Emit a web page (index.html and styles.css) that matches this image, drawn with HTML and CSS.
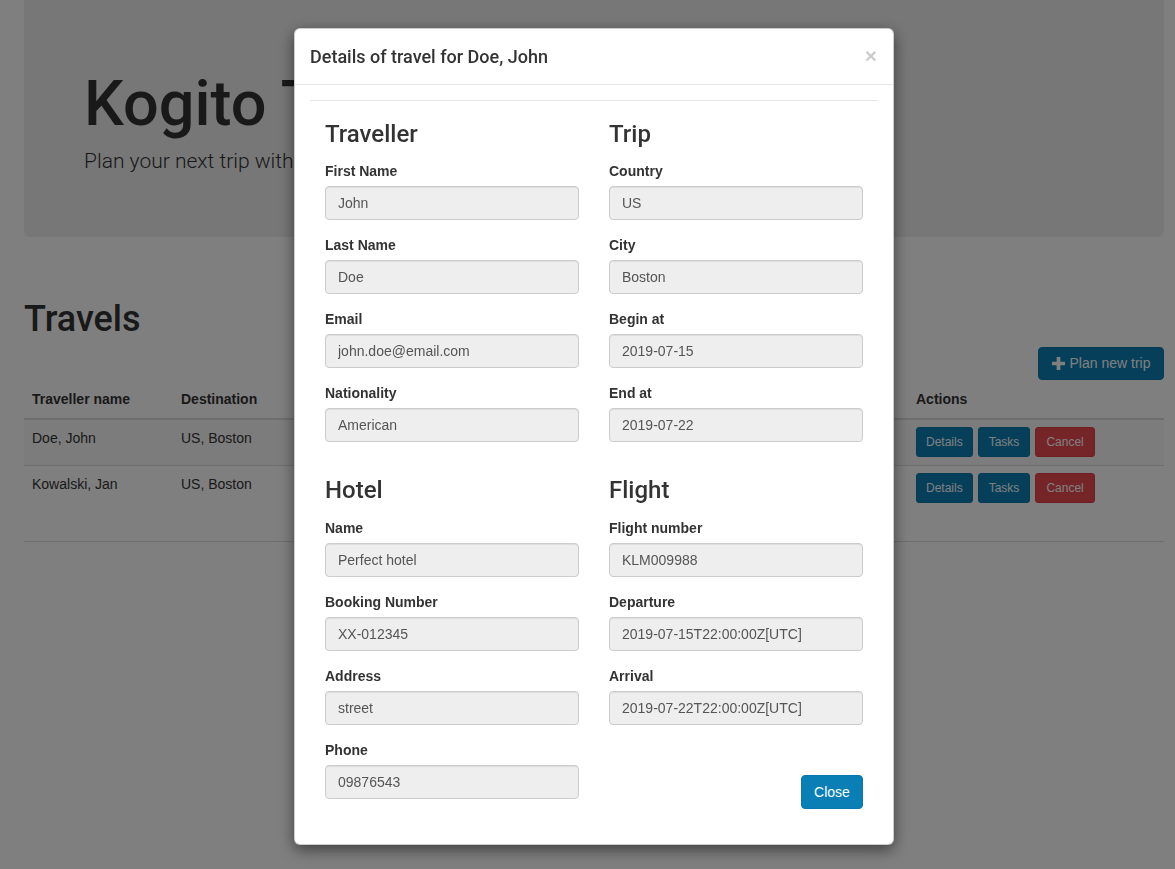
FILE: index.html
```html
<!DOCTYPE html>
<html lang="en">
<head>
<meta charset="utf-8">
<title>Kogito Travel Agency</title>
<link rel="stylesheet" href="styles.css">
</head>
<body>
<div class="page">
  <div class="jumbotron">
    <h1 class="jumbo-title">Kogito Travel Agency</h1>
    <p class="jumbo-lead">Plan your next trip with Kogito Travel Agency</p>
  </div>

  <h1 class="section-title">Travels</h1>
  <div class="toolbar">
    <button class="btn btn-primary"><svg class="plus" viewBox="0 0 14 14" width="13" height="13"><path d="M5 0h4v5h5v4H9v5H5V9H0V5h5z" fill="#fff"/></svg>Plan new trip</button>
  </div>

  <table class="table">
    <thead>
      <tr>
        <th class="c1">Traveller name</th>
        <th class="c2">Destination</th>
        <th class="c3">Begin at</th>
        <th class="c4">End at</th>
        <th class="c5">Status</th>
        <th>Actions</th>
      </tr>
    </thead>
    <tbody>
      <tr class="striped">
        <td>Doe, John</td>
        <td>US, Boston</td>
        <td>2019-07-15</td>
        <td>2019-07-22</td>
        <td>Active</td>
        <td class="actions"><button class="btn btn-sm btn-primary">Details</button><button class="btn btn-sm btn-primary">Tasks</button><button class="btn btn-sm btn-danger">Cancel</button></td>
      </tr>
      <tr class="tall">
        <td>Kowalski, Jan</td>
        <td>US, Boston</td>
        <td>2019-07-15</td>
        <td>2019-07-22</td>
        <td>Active</td>
        <td class="actions"><button class="btn btn-sm btn-primary">Details</button><button class="btn btn-sm btn-primary">Tasks</button><button class="btn btn-sm btn-danger">Cancel</button></td>
      </tr>
    </tbody>
  </table>
</div>

<div class="backdrop"></div>

<div class="modal">
  <div class="modal-content">
    <div class="modal-header">
      <h4 class="modal-title">Details of travel for Doe, John</h4>
      <span class="close">×</span>
    </div>
    <div class="modal-body">
      <hr class="rule">
      <div class="grid">
        <section class="section">
          <h3 class="sec-title">Traveller</h3>
          <div class="form-group"><label class="label">First Name</label><input class="form-control" value="John" readonly></div>
          <div class="form-group"><label class="label">Last Name</label><input class="form-control" value="Doe" readonly></div>
          <div class="form-group"><label class="label">Email</label><input class="form-control" value="john.doe@email.com" readonly></div>
          <div class="form-group"><label class="label">Nationality</label><input class="form-control" value="American" readonly></div>
        </section>
        <section class="section">
          <h3 class="sec-title">Trip</h3>
          <div class="form-group"><label class="label">Country</label><input class="form-control" value="US" readonly></div>
          <div class="form-group"><label class="label">City</label><input class="form-control" value="Boston" readonly></div>
          <div class="form-group"><label class="label">Begin at</label><input class="form-control" value="2019-07-15" readonly></div>
          <div class="form-group"><label class="label">End at</label><input class="form-control" value="2019-07-22" readonly></div>
        </section>
        <section class="section">
          <h3 class="sec-title">Hotel</h3>
          <div class="form-group"><label class="label">Name</label><input class="form-control" value="Perfect hotel" readonly></div>
          <div class="form-group"><label class="label">Booking Number</label><input class="form-control" value="XX-012345" readonly></div>
          <div class="form-group"><label class="label">Address</label><input class="form-control" value="street" readonly></div>
          <div class="form-group"><label class="label">Phone</label><input class="form-control" value="09876543" readonly></div>
        </section>
        <section class="section">
          <h3 class="sec-title">Flight</h3>
          <div class="form-group"><label class="label">Flight number</label><input class="form-control" value="KLM009988" readonly></div>
          <div class="form-group"><label class="label">Departure</label><input class="form-control" value="2019-07-15T22:00:00Z[UTC]" readonly></div>
          <div class="form-group"><label class="label">Arrival</label><input class="form-control" value="2019-07-22T22:00:00Z[UTC]" readonly></div>
          <div class="footer-actions"><button class="btn btn-primary btn-close">Close</button></div>
        </section>
      </div>
    </div>
  </div>
</div>
</body>
</html>
```

FILE: styles.css
```css
* { box-sizing: border-box; }

html, body {
  margin: 0;
  padding: 0;
  background: #fff;
  height: 100%;
  overflow: hidden;
}

body {
  font-family: "Liberation Sans", Arial, Helvetica, sans-serif;
  font-size: 14px;
  line-height: 1.42857;
  color: #333;
}

.page {
  padding: 0 11px 0 24px;
}

/* Jumbotron */
.jumbotron {
  background: #eee;
  border-radius: 0 0 6px 6px;
  height: 237px;
  padding: 48px 60px;
}

.jumbo-title {
  margin: 21px 0 8px;
  font-family: Roboto, "Liberation Sans", sans-serif;
  font-size: 63px;
  line-height: 1.1;
  font-weight: 500;
  white-space: nowrap;
}

.jumbo-lead {
  margin: 0;
  font-family: Roboto, "Liberation Sans", sans-serif;
  font-size: 21px;
  font-weight: 300;
  line-height: 30px;
  color: #333;
}

/* Travels */
.section-title {
  margin: 63px 0 0;
  font-family: Roboto, "Liberation Sans", sans-serif;
  font-size: 36px;
  line-height: 1.1;
  font-weight: 500;
}

.toolbar {
  display: flex;
  justify-content: flex-end;
  margin-top: 7px;
}

.btn {
  display: inline-flex;
  align-items: center;
  justify-content: center;
  font-family: inherit;
  font-size: 14px;
  line-height: 20px;
  padding: 6px 12px;
  border: 1px solid transparent;
  border-radius: 4px;
  color: #fff;
  cursor: pointer;
}

.btn-primary {
  background: #0a7fb5;
  border-color: #0a78ab;
}

.btn-danger {
  background: #ea4a50;
  border-color: #dc4046;
}

.btn-sm {
  font-size: 12px;
  line-height: 18px;
  padding: 5px 10px;
  border-radius: 3px;
}

.plus {
  margin-right: 5px;
}

.toolbar .btn {
  height: 33px;
  width: 126px;
}

/* Table */
.table {
  width: 100%;
  border-collapse: collapse;
  border-spacing: 0;
}

.table th {
  text-align: left;
  font-weight: 700;
  padding: 9px 8px 9px;
  line-height: 20px;
  border-bottom: 2px solid #ddd;
  vertical-align: bottom;
}

.table td {
  padding: 8px;
  line-height: 20px;
  border-top: 1px solid #ddd;
  vertical-align: top;
}

.table td.actions {
  padding-top: 7px;
  padding-bottom: 8px;
}

.c1 { width: 149px; }
.c2 { width: 150px; }
.c3 { width: 195px; }
.c4 { width: 195px; }
.c5 { width: 195px; }

.striped td { background: #f9f9f9; }

.tall td { height: 76px; }

.table tbody tr:last-child td { border-bottom: 1px solid #ddd; }

.actions .btn + .btn { margin-left: 5px; }

.actions .btn:first-child { padding: 5px 9px; }

/* Backdrop + modal */
.backdrop {
  position: fixed;
  inset: 0;
  background: rgba(0, 0, 0, 0.5);
}

.modal {
  position: fixed;
  top: 28px;
  left: 294px;
  width: 600px;
}

.modal-content {
  background: #fff;
  border: 1px solid rgba(0, 0, 0, 0.2);
  border-radius: 6px;
  box-shadow: 0 5px 15px rgba(0, 0, 0, 0.5);
}

.modal-header {
  display: flex;
  justify-content: space-between;
  align-items: flex-start;
  padding: 15px;
  border-bottom: 1px solid #e5e5e5;
}

.modal-title {
  margin: 0;
  font-family: Roboto, "Liberation Sans", sans-serif;
  font-size: 18px;
  font-weight: 500;
  line-height: 25px;
  color: #333;
}

.close {
  font-size: 21px;
  font-weight: 700;
  line-height: 1;
  color: #000;
  opacity: 0.2;
  margin-right: 1px;
  margin-top: 1px;
}

.modal-body {
  padding: 15px 15px 30px;
}

.rule {
  margin: 0;
  border: 0;
  border-top: 1px solid #e5e5e5;
}

.grid {
  display: grid;
  grid-template-columns: 1fr 1fr;
  column-gap: 30px;
  padding: 0 15px;
}

.sec-title {
  margin: 20px 0 14px;
  font-family: Roboto, "Liberation Sans", sans-serif;
  font-size: 24px;
  line-height: 1.1;
  font-weight: 500;
  color: #333;
}

.form-group {
  margin-bottom: 15px;
}

.label {
  display: block;
  font-weight: 700;
  margin-bottom: 5px;
  line-height: 20px;
  font-size: 14px;
}

.form-control {
  display: block;
  width: 100%;
  height: 34px;
  padding: 6px 12px;
  font-family: inherit;
  font-size: 14px;
  line-height: 20px;
  color: #555;
  background: #eee;
  border: 1px solid #ccc;
  border-radius: 4px;
  box-shadow: inset 0 1px 1px rgba(0, 0, 0, 0.075);
  outline: none;
}

.footer-actions {
  display: flex;
  justify-content: flex-end;
  padding-top: 35px;
}

.btn-close {
  height: 34px;
  width: 62px;
}
```
